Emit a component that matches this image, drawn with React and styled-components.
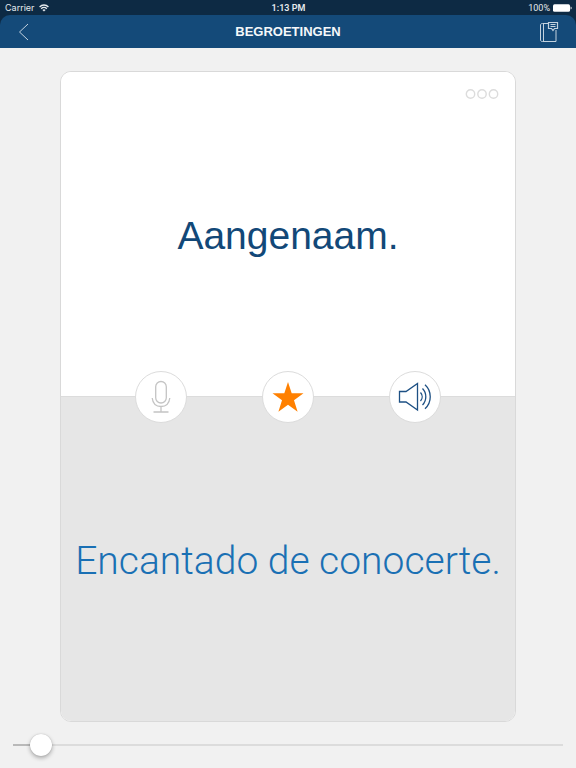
import React, { useState } from "react";
import styled, { createGlobalStyle } from "styled-components";

const GlobalStyle = createGlobalStyle`
  *, *::before, *::after { box-sizing: border-box; }
  body {
    margin: 0;
    background: #f1f1f1;
    font-family: "Liberation Sans", Arial, sans-serif;
  }
  button, input { font: inherit; margin: 0; }
`;

const Screen = styled.div`
  min-height: 100vh;
  display: flex;
  flex-direction: column;
`;

const Header = styled.header`
  background: #0d2a44;
`;

const StatusBar = styled.div`
  display: grid;
  grid-template-columns: 1fr auto 1fr;
  align-items: center;
  height: 15px;
  padding: 1px 4px 0 5px;
  font-family: Roboto, "Liberation Sans", sans-serif;
  font-size: 9px;
  line-height: 14px;
  color: #e6eaee;
`;

const StatusGroup = styled.div`
  display: flex;
  align-items: center;
  justify-content: ${(p) => (p.$end ? "flex-end" : "flex-start")};
  gap: ${(p) => (p.$end ? "3px" : "4px")};
  font-family: ${(p) => (p.$end ? "Roboto" : "Inter")}, "Liberation Sans", sans-serif;
`;

const Clock = styled.time`
  font-weight: 600;
`;

const NavBar = styled.nav`
  display: grid;
  grid-template-columns: 1fr auto 1fr;
  align-items: center;
  height: 33px;
  padding: 0 17px;
  border-radius: 10px 10px 0 0;
  background: #144a79;
`;

const Title = styled.h1`
  margin: 0;
  font-size: 13px;
  line-height: 16px;
  font-weight: 700;
  color: #f5f8fa;
`;

const NavButton = styled.button`
  justify-self: ${(p) => (p.$end ? "end" : "start")};
  display: flex;
  padding: 0;
  border: 0;
  background: none;
  color: #c3d2df;
  cursor: pointer;
`;

const Main = styled.main`
  flex: 1;
  display: flex;
  padding: 23px 60px 0;
`;

const Card = styled.article`
  position: relative;
  flex: 1;
  display: grid;
  grid-template-rows: 1fr 1fr;
  overflow: hidden;
  border: 1px solid #d9d9d9;
  border-radius: 11px;
  background: #ffffff;
`;

const Half = styled.section`
  display: grid;
  place-items: center;
  padding: 4px 8px 0;
  background: ${(p) => (p.$shaded ? "#e6e6e6" : "#ffffff")};
  border-bottom: ${(p) => (p.$shaded ? "0" : "1px solid #dcdcdc")};
`;

const Phrase = styled.p`
  margin: 0;
  font-size: 39px;
  line-height: 48px;
  text-align: center;
  color: #124878;
`;

const Translation = styled(Phrase)`
  font-family: Roboto, "Liberation Sans", sans-serif;
  font-weight: 300;
  color: #1a70b4;
`;

const MoreButton = styled.button`
  position: absolute;
  top: 17px;
  right: 16px;
  display: flex;
  padding: 0;
  border: 0;
  background: none;
  color: #dcdcdc;
  cursor: pointer;
`;

const Actions = styled.div`
  position: absolute;
  inset: 0;
  display: flex;
  align-items: center;
  justify-content: center;
  gap: 75px;
  pointer-events: none;
`;

const RoundButton = styled.button`
  display: grid;
  place-items: center;
  width: 52px;
  height: 52px;
  padding: 0;
  border: 1px solid #dcdcdc;
  border-radius: 50%;
  background: #ffffff;
  color: ${(p) => p.$color};
  cursor: pointer;
  pointer-events: auto;
`;

const Footer = styled.footer`
  display: flex;
  align-items: center;
  height: 46px;
  padding: 0 13px;
`;

const Slider = styled.input`
  appearance: none;
  width: 100%;
  height: 22px;
  background: linear-gradient(
      to right,
      #b9b9b9 ${(p) => p.$fill}%,
      #dcdcdc ${(p) => p.$fill}%
    )
    center / 100% 2px no-repeat;
  cursor: pointer;

  &::-webkit-slider-thumb {
    appearance: none;
    width: 22px;
    height: 22px;
    border-radius: 50%;
    background: #ffffff;
    box-shadow: 0 2px 4px rgba(0, 0, 0, 0.3), 0 0 1px rgba(0, 0, 0, 0.25);
  }
`;

const WifiIcon = () => (
  <svg width="10" height="8" viewBox="0 0 10 8" fill="none" stroke="currentColor" strokeWidth="1.4" aria-hidden="true">
    <path d="M0.6 2.9a6.2 6.2 0 0 1 8.8 0" />
    <path d="M2.2 4.7a4 4 0 0 1 5.6 0" />
    <path d="M5 7.6 3.4 6a2.3 2.3 0 0 1 3.2 0z" fill="currentColor" stroke="none" />
  </svg>
);

const BatteryIcon = () => (
  <svg width="19" height="8" viewBox="0 0 19 8" fill="#ffffff" aria-hidden="true">
    <rect x="0" y="0.3" width="17" height="7.4" rx="1.5" />
    <path d="M17.6 2.5c1.4.5 1.4 2.5 0 3z" />
  </svg>
);

const BackIcon = () => (
  <svg width="14" height="18" viewBox="0 0 14 18" fill="none" stroke="currentColor" aria-hidden="true">
    <path d="M11 1 2.500 9 11 17" />
  </svg>
);

const BookIcon = () => (
  <svg width="20" height="22" viewBox="0 0 20 22" fill="none" stroke="currentColor" aria-hidden="true">
    <path d="M9.500 2.500H3.500C2.300 2.500 1.500 3 1.500 4v15c0 1 .8 1.500 2 1.500h13.500V9M4.500 2.500v18" />
    <path d="M9.500 1.500h9v6h-3l-1.500 2-1.500-2h-3z" strokeWidth="1.2" />
    <path d="M11.500 3.500h5M11.500 5.500h5" />
  </svg>
);

const DotsIcon = () => (
  <svg width="34" height="11" viewBox="0 0 34 11" fill="none" stroke="currentColor" strokeWidth="1.4" aria-hidden="true">
    <circle cx="5.500" cy="5" r="4.200" />
    <circle cx="17" cy="5" r="4.200" />
    <circle cx="28.500" cy="5" r="4.200" />
  </svg>
);

const MicIcon = () => (
  <svg width="20" height="34" viewBox="0 0 20 34" fill="none" stroke="currentColor" strokeWidth="1.3" aria-hidden="true">
    <rect x="4.700" y="1.500" width="10.600" height="21.500" rx="5.300" />
    <path d="M1.200 18c.6 5.400 4 8.500 8.800 8.500s8.200-3.100 8.800-8.500M10 26.500v5.500M2.500 32h15" />
  </svg>
);

const StarIcon = () => (
  <svg width="32" height="32" viewBox="0 0 32 32" fill="currentColor" aria-hidden="true">
    <path d="M16 1l3.700 11.300H31.500L22 19.300l3.600 11.500L16 23.800l-9.600 7L10 19.300.5 12.300h11.800z" />
  </svg>
);

const SpeakerIcon = () => (
  <svg width="34" height="30" viewBox="0 0 34 30" fill="none" stroke="currentColor" strokeWidth="1.3" aria-hidden="true">
    <path d="M1.500 9.500H8L19.500 1.500v26.500L8 20H1.500z" />
    <path d="M22.500 10.500c2.200 2.400 2.200 6 0 8.500M24.500 6.500c4.400 4.500 4.400 12 0 16.500M27 2.700c7 6.500 7 17.500 0 24" />
  </svg>
);

const FIRST = 1;
const LAST = 32;

export default function App() {
  const [position, setPosition] = useState(2);
  const [starred, setStarred] = useState(true);

  return (
    <Screen>
      <GlobalStyle />
      <Header>
        <StatusBar>
          <StatusGroup>
            <span>Carrier</span>
            <WifiIcon />
          </StatusGroup>
          <Clock>1:13 PM</Clock>
          <StatusGroup $end>
            <span>100%</span>
            <BatteryIcon />
          </StatusGroup>
        </StatusBar>
        <NavBar>
          <NavButton aria-label="Terug"><BackIcon /></NavButton>
          <Title>BEGROETINGEN</Title>
          <NavButton $end aria-label="Woordenboek"><BookIcon /></NavButton>
        </NavBar>
      </Header>
      <Main>
        <Card>
          <Half>
            <Phrase lang="nl">Aangenaam.</Phrase>
          </Half>
          <Half $shaded>
            <Translation lang="es">Encantado de conocerte.</Translation>
          </Half>
          <MoreButton aria-label="Meer"><DotsIcon /></MoreButton>
          <Actions>
            <RoundButton $color="#c4c4c4" aria-label="Opnemen"><MicIcon /></RoundButton>
            <RoundButton
              $color={starred ? "#ff8000" : "#c4c4c4"}
              aria-label="Favoriet"
              aria-pressed={starred}
              onClick={() => setStarred(!starred)}
            >
              <StarIcon />
            </RoundButton>
            <RoundButton $color="#1d5084" aria-label="Afspelen"><SpeakerIcon /></RoundButton>
          </Actions>
        </Card>
      </Main>
      <Footer>
        <Slider
          type="range"
          aria-label="Kaart"
          min={FIRST}
          max={LAST}
          value={position}
          $fill={((position - FIRST) / (LAST - FIRST)) * 96 + 2}
          onChange={(e) => setPosition(Number(e.target.value))}
        />
      </Footer>
    </Screen>
  );
}
